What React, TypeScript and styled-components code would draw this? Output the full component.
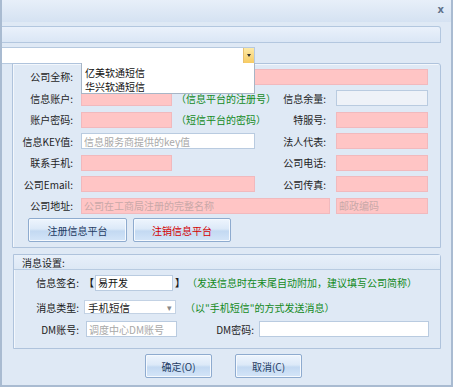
import React from "react";
import styled, { createGlobalStyle, css } from "styled-components";

const GlobalStyle = createGlobalStyle`
  html, body { margin: 0; padding: 0; background: #dfe9f5; }
  body { font-family: "Noto Sans CJK SC", "Noto Sans", sans-serif; font-size: 10px; color: #1c1c1c; }
  * { box-sizing: border-box; }
`;

const Window = styled.div`
  position: relative;
  width: 453px;
  height: 387px;
  background: #dfe9f5;
  border-left: 2px solid #a9bbd1;
  border-right: 2px solid #a9bbd1;
  border-bottom: 2px solid #a9bbd1;
  overflow: hidden;
`;

const TitleBar = styled.div`
  height: 22px;
  display: flex;
  align-items: center;
  justify-content: flex-end;
  padding-right: 7px;
  background: linear-gradient(#e7eff9, #d5e2f2);
`;

const Close = styled.span`
  font-family: "DejaVu Sans", sans-serif;
  font-weight: bold;
  font-size: 10px;
  color: #60728a;
  margin-top: -3px;
`;

const Body = styled.div`
  padding-right: 10px;
  display: flex;
  flex-direction: column;
`;

const PanelHeader = styled.div`
  margin-top: 4px;
  height: 17px;
  border: 1px solid #b3c7df;
  border-left: none;
  border-radius: 0 3px 0 0;
  background: linear-gradient(#eaf1fb, #dae6f5);
`;

const TopCombo = styled.div`
  margin-top: 4px;
  width: 253px;
  height: 17px;
  background: #fff;
  border: 1px solid #b6c9df;
  border-left: none;
  display: flex;
  justify-content: flex-end;
`;

const HotArrow = styled.div`
  width: 11px;
  height: 15px;
  background: linear-gradient(#fdeaa8, #f7cb62);
  border-left: 1px solid #e8c070;
  display: flex;
  align-items: center;
  justify-content: center;
  &::after {
    content: "";
    border-left: 2.5px solid transparent;
    border-right: 2.5px solid transparent;
    border-top: 3px solid #333;
  }
`;

const DropList = styled.div`
  position: absolute;
  left: 79px;
  top: 63px;
  width: 174px;
  height: 31px;
  background: #fff;
  border: 1px solid #a7b5c6;
  border-top: none;
  padding: 3px 0 0 3px;
  display: flex;
  flex-direction: column;
`;

const DropItem = styled.div`
  height: 14px;
  line-height: 14px;
  font-size: 10px;
  color: #111;
`;

const Group = styled.div<{ $left: number; $top: number; $height: number }>`
  margin-left: ${(p) => p.$left}px;
  margin-top: ${(p) => p.$top}px;
  height: ${(p) => p.$height}px;
  border: 1px solid #afc3dc;
  box-shadow: inset 1px 1px 0 #f3f7fc;
  border-radius: 0 3px 0 0;
`;

const Grid = styled.div`
  display: grid;
  grid-template-columns: 68px 197px 58px 92px;
  grid-auto-rows: 21.5px;
  padding-top: 2px;
  align-items: center;
`;

const Label = styled.div<{ $pr?: number }>`
  text-align: right;
  padding-right: ${(p) => p.$pr ?? 8}px;
  white-space: nowrap;
  color: #1e1e1e;
`;

const fieldBase = css`
  height: 16px;
  border: 1px solid #b9cbe0;
  font: inherit;
  font-size: 10px;
  padding: 0 2px;
  outline: none;
  color: #111;
  display: block;
`;

type Tone = "pink" | "white" | "gray";

const Field = styled.input<{ $w: number; $tone: Tone }>`
  ${fieldBase};
  width: ${(p) => p.$w}px;
  background: ${(p) => (p.$tone === "pink" ? "#ffc5c5" : p.$tone === "gray" ? "#eef2f8" : "#fff")};
  border-color: ${(p) => (p.$tone === "pink" ? "#f1b9bd" : "#b9cbe0")};
  &::placeholder {
    color: ${(p) => (p.$tone === "pink" ? "#c9a8a8" : "#a8a8a8")};
  }
`;

const Span = styled.div<{ $col: string }>`
  grid-column: ${(p) => p.$col};
`;

const Cell = styled.div`
  display: flex;
  align-items: center;
  gap: 4px;
`;

const Hint = styled.span`
  color: #138a1c;
  white-space: nowrap;
`;

const ButtonRow = styled.div`
  display: flex;
  gap: 6px;
  margin: 1.5px 0 0 15px;
`;

const Btn = styled.button<{ $w: number; $red?: boolean }>`
  width: ${(p) => p.$w}px;
  height: 24px;
  font: inherit;
  font-size: 10px;
  color: ${(p) => (p.$red ? "#d40000" : "#1f3c63")};
  border: 1px solid #8eabcf;
  border-radius: 2px;
  background: linear-gradient(#eef5fd 0%, #dce9f8 45%, #c3d9f2 55%, #d4e5f8 100%);
  box-shadow: inset 0 0 0 1px #f5f9fe;
  padding: 0;
`;

const GroupHeader = styled.div`
  height: 15px;
  border-bottom: 1px solid #b8cbe1;
  background: linear-gradient(#e8f0fa, #dde8f5);
  padding-left: 8px;
  display: flex;
  align-items: center;
  color: #1e1e1e;
`;

const MsgRow = styled.div<{ $h: number }>`
  height: ${(p) => p.$h}px;
  display: flex;
  align-items: center;
`;

const MsgLabel = styled.div`
  width: 69px;
  text-align: right;
  padding-right: 4px;
  white-space: nowrap;
`;

const Bracket = styled.span<{ $w: number }>`
  width: ${(p) => p.$w}px;
  font-weight: bold;
  text-align: center;
`;

const Combo = styled.div`
  width: 92px;
  height: 14px;
  border: 1px solid #c3d2e4;
  background: #fff;
  display: flex;
  align-items: center;
  justify-content: space-between;
  padding: 0 3px 0 3px;
  margin-left: 1px;
  font-size: 10.5px;
`;

const Dash = styled.span`
  color: #888;
  font-size: 9px;
`;

const Footer = styled.div`
  margin-top: 5px;
  display: flex;
  justify-content: center;
  gap: 23px;
  padding-left: 4px;
`;

export default function App() {
  return (
    <>
      <GlobalStyle />
      <Window>
        <TitleBar>
          <Close>x</Close>
        </TitleBar>
        <Body>
          <PanelHeader />
          <TopCombo>
            <HotArrow />
          </TopCombo>
          <Group $left={10} $top={-1} $height={185}>
            <Grid>
              <Label>公司全称:</Label>
              <Span $col="2 / 5">
                <Field $w={347} $tone="pink" readOnly />
              </Span>

              <Label>信息账户:</Label>
              <Cell>
                <Field $w={91} $tone="pink" readOnly />
                <Hint>（信息平台的注册号）</Hint>
              </Cell>
              <Label $pr={10}>信息余量:</Label>
              <Field $w={92} $tone="gray" readOnly />

              <Label>账户密码:</Label>
              <Cell>
                <Field $w={91} $tone="pink" readOnly />
                <Hint>（短信平台的密码）</Hint>
              </Cell>
              <Label $pr={10}>特服号:</Label>
              <Field $w={92} $tone="pink" readOnly />

              <Label>信息KEY值:</Label>
              <Field $w={174} $tone="white" placeholder="信息服务商提供的key值" readOnly />
              <Label $pr={10}>法人代表:</Label>
              <Field $w={92} $tone="pink" readOnly />

              <Label>联系手机:</Label>
              <Field $w={91} $tone="pink" readOnly />
              <Label $pr={10}>公司电话:</Label>
              <Field $w={92} $tone="pink" readOnly />

              <Label>公司Email:</Label>
              <Field $w={174} $tone="pink" readOnly />
              <Label $pr={10}>公司传真:</Label>
              <Field $w={92} $tone="pink" readOnly />

              <Label>公司地址:</Label>
              <Span $col="2 / 4">
                <Field $w={249} $tone="pink" placeholder="公司在工商局注册的完整名称" readOnly />
              </Span>
              <Field $w={92} $tone="pink" placeholder="邮政编码" readOnly />
            </Grid>
            <ButtonRow>
              <Btn $w={99}>注册信息平台</Btn>
              <Btn $w={98} $red>
                注销信息平台
              </Btn>
            </ButtonRow>
          </Group>

          <Group $left={11} $top={6} $height={95}>
            <GroupHeader>消息设置:</GroupHeader>
            <MsgRow $h={25}>
              <MsgLabel>信息签名:</MsgLabel>
              <Bracket $w={12}>【</Bracket>
              <Field $w={78} $tone="white" defaultValue="易开发" />
              <Bracket $w={14}>】</Bracket>
              <Hint>（发送信息时在末尾自动附加，建议填写公司简称）</Hint>
            </MsgRow>
            <MsgRow $h={24}>
              <MsgLabel>消息类型:</MsgLabel>
              <Combo>
                手机短信
                <Dash>▾</Dash>
              </Combo>
              <Hint style={{ marginLeft: 9 }}>（以"手机短信"的方式发送消息）</Hint>
            </MsgRow>
            <MsgRow $h={20}>
              <MsgLabel>DM账号:</MsgLabel>
              <Field $w={91} $tone="white" placeholder="调度中心DM账号" readOnly style={{ marginLeft: 3 }} />
              <Label $pr={5} style={{ width: 82 }}>DM密码:</Label>
              <Field $w={170} $tone="white" readOnly />
            </MsgRow>
          </Group>

          <Footer>
            <Btn $w={67}>确定(O)</Btn>
            <Btn $w={67}>取消(C)</Btn>
          </Footer>
        </Body>
        <DropList>
          <DropItem>亿美软通短信</DropItem>
          <DropItem>华兴软通短信</DropItem>
        </DropList>
      </Window>
    </>
  );
}
